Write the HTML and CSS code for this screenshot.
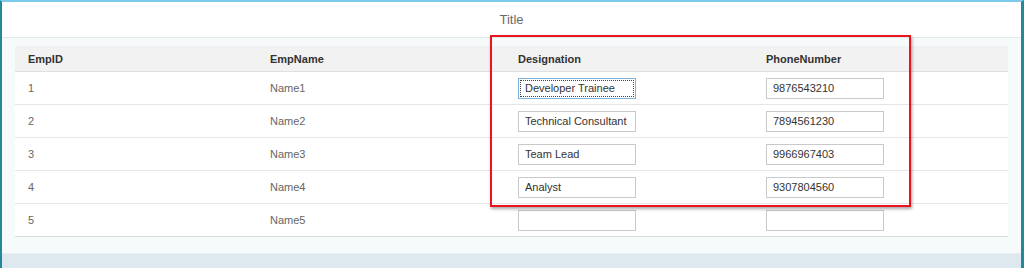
FILE: index.html
```html
<!DOCTYPE html>
<html lang="en">
<head>
  <meta charset="UTF-8" />
  <title>Employees</title>
  <link rel="stylesheet" href="styles.css">
</head>
<body>
  <div class="shell">
    <div class="page-header">Title</div>

    <div class="page-content">
      <div class="emp-table">
        <div class="row head">
          <div class="cell">EmpID</div>
          <div class="cell">EmpName</div>
          <div class="cell">Designation</div>
          <div class="cell">PhoneNumber</div>
        </div>
        <div class="row">
          <div class="cell">1</div>
          <div class="cell">Name1</div>
          <div class="cell"><input class="field focused" type="text" value="Developer Trainee"></div>
          <div class="cell"><input class="field" type="text" value="9876543210"></div>
        </div>
        <div class="row">
          <div class="cell">2</div>
          <div class="cell">Name2</div>
          <div class="cell"><input class="field" type="text" value="Technical Consultant"></div>
          <div class="cell"><input class="field" type="text" value="7894561230"></div>
        </div>
        <div class="row">
          <div class="cell">3</div>
          <div class="cell">Name3</div>
          <div class="cell"><input class="field" type="text" value="Team Lead"></div>
          <div class="cell"><input class="field" type="text" value="9966967403"></div>
        </div>
        <div class="row">
          <div class="cell">4</div>
          <div class="cell">Name4</div>
          <div class="cell"><input class="field" type="text" value="Analyst"></div>
          <div class="cell"><input class="field" type="text" value="9307804560"></div>
        </div>
        <div class="row">
          <div class="cell">5</div>
          <div class="cell">Name5</div>
          <div class="cell"><input class="field" type="text" value=""></div>
          <div class="cell"><input class="field" type="text" value=""></div>
        </div>
      </div>
    </div>

    <div class="page-footer"></div>

    <div class="highlight"></div>
  </div>
</body>
</html>
```

FILE: styles.css
```css
html, body {
  margin: 0;
  padding: 0;
}

body {
  font-family: "Liberation Sans", Arial, sans-serif;
  font-size: 11px;
  background: #ffffff;
}

.shell {
  position: relative;
  width: 1024px;
  height: 268px;
  box-sizing: border-box;
  border-top: 2px solid #7ccbea;
  border-left: 2px solid #23899a;
  border-right: 3px solid #23899a;
  display: flex;
  flex-direction: column;
  overflow: hidden;
}

.page-header {
  height: 35px;
  flex: none;
  background: #ffffff;
  border-bottom: 1px solid #e4e8ea;
  display: flex;
  align-items: center;
  justify-content: center;
  color: #6a6a6a;
  font-size: 13px;
}

.page-content {
  flex: none;
  background: #f7fafb;
  padding: 8px 13px 16px 13px;
}

.page-footer {
  flex: 1;
  background: #dde9ee;
  border-top: 1px solid #e6eef1;
}

.emp-table {
  background: #ffffff;
  border-bottom: 1px solid #dcdcdc;
}

.row {
  display: grid;
  grid-template-columns: 242px 248px 248px 1fr;
  height: 32px;
  border-bottom: 1px solid #e6e6e6;
  align-items: center;
  color: #666666;
}

.row:last-child {
  border-bottom: none;
}

.row.head {
  height: 25px;
  background: #f2f2f2;
  border-bottom: 1px solid #e0e0e0;
  color: #333333;
  font-weight: bold;
}

.cell {
  padding-left: 13px;
}

.field {
  display: block;
  box-sizing: border-box;
  width: 118px;
  height: 21px;
  margin: 0;
  padding: 0 0 0 6px;
  border: 1px solid #c9c9c9;
  background: #ffffff;
  font-family: "Liberation Sans", Arial, sans-serif;
  font-size: 11px;
  color: #333333;
}

.field.focused {
  border-color: #7db3dc;
  outline: 1px dotted #444444;
  outline-offset: -3px;
}

.highlight {
  position: absolute;
  left: 488px;
  top: 33px;
  width: 421px;
  height: 172px;
  box-sizing: border-box;
  border: 2px solid #e8161c;
  box-shadow: 1px 2px 3px rgba(0, 0, 0, 0.35);
  pointer-events: none;
}
```
